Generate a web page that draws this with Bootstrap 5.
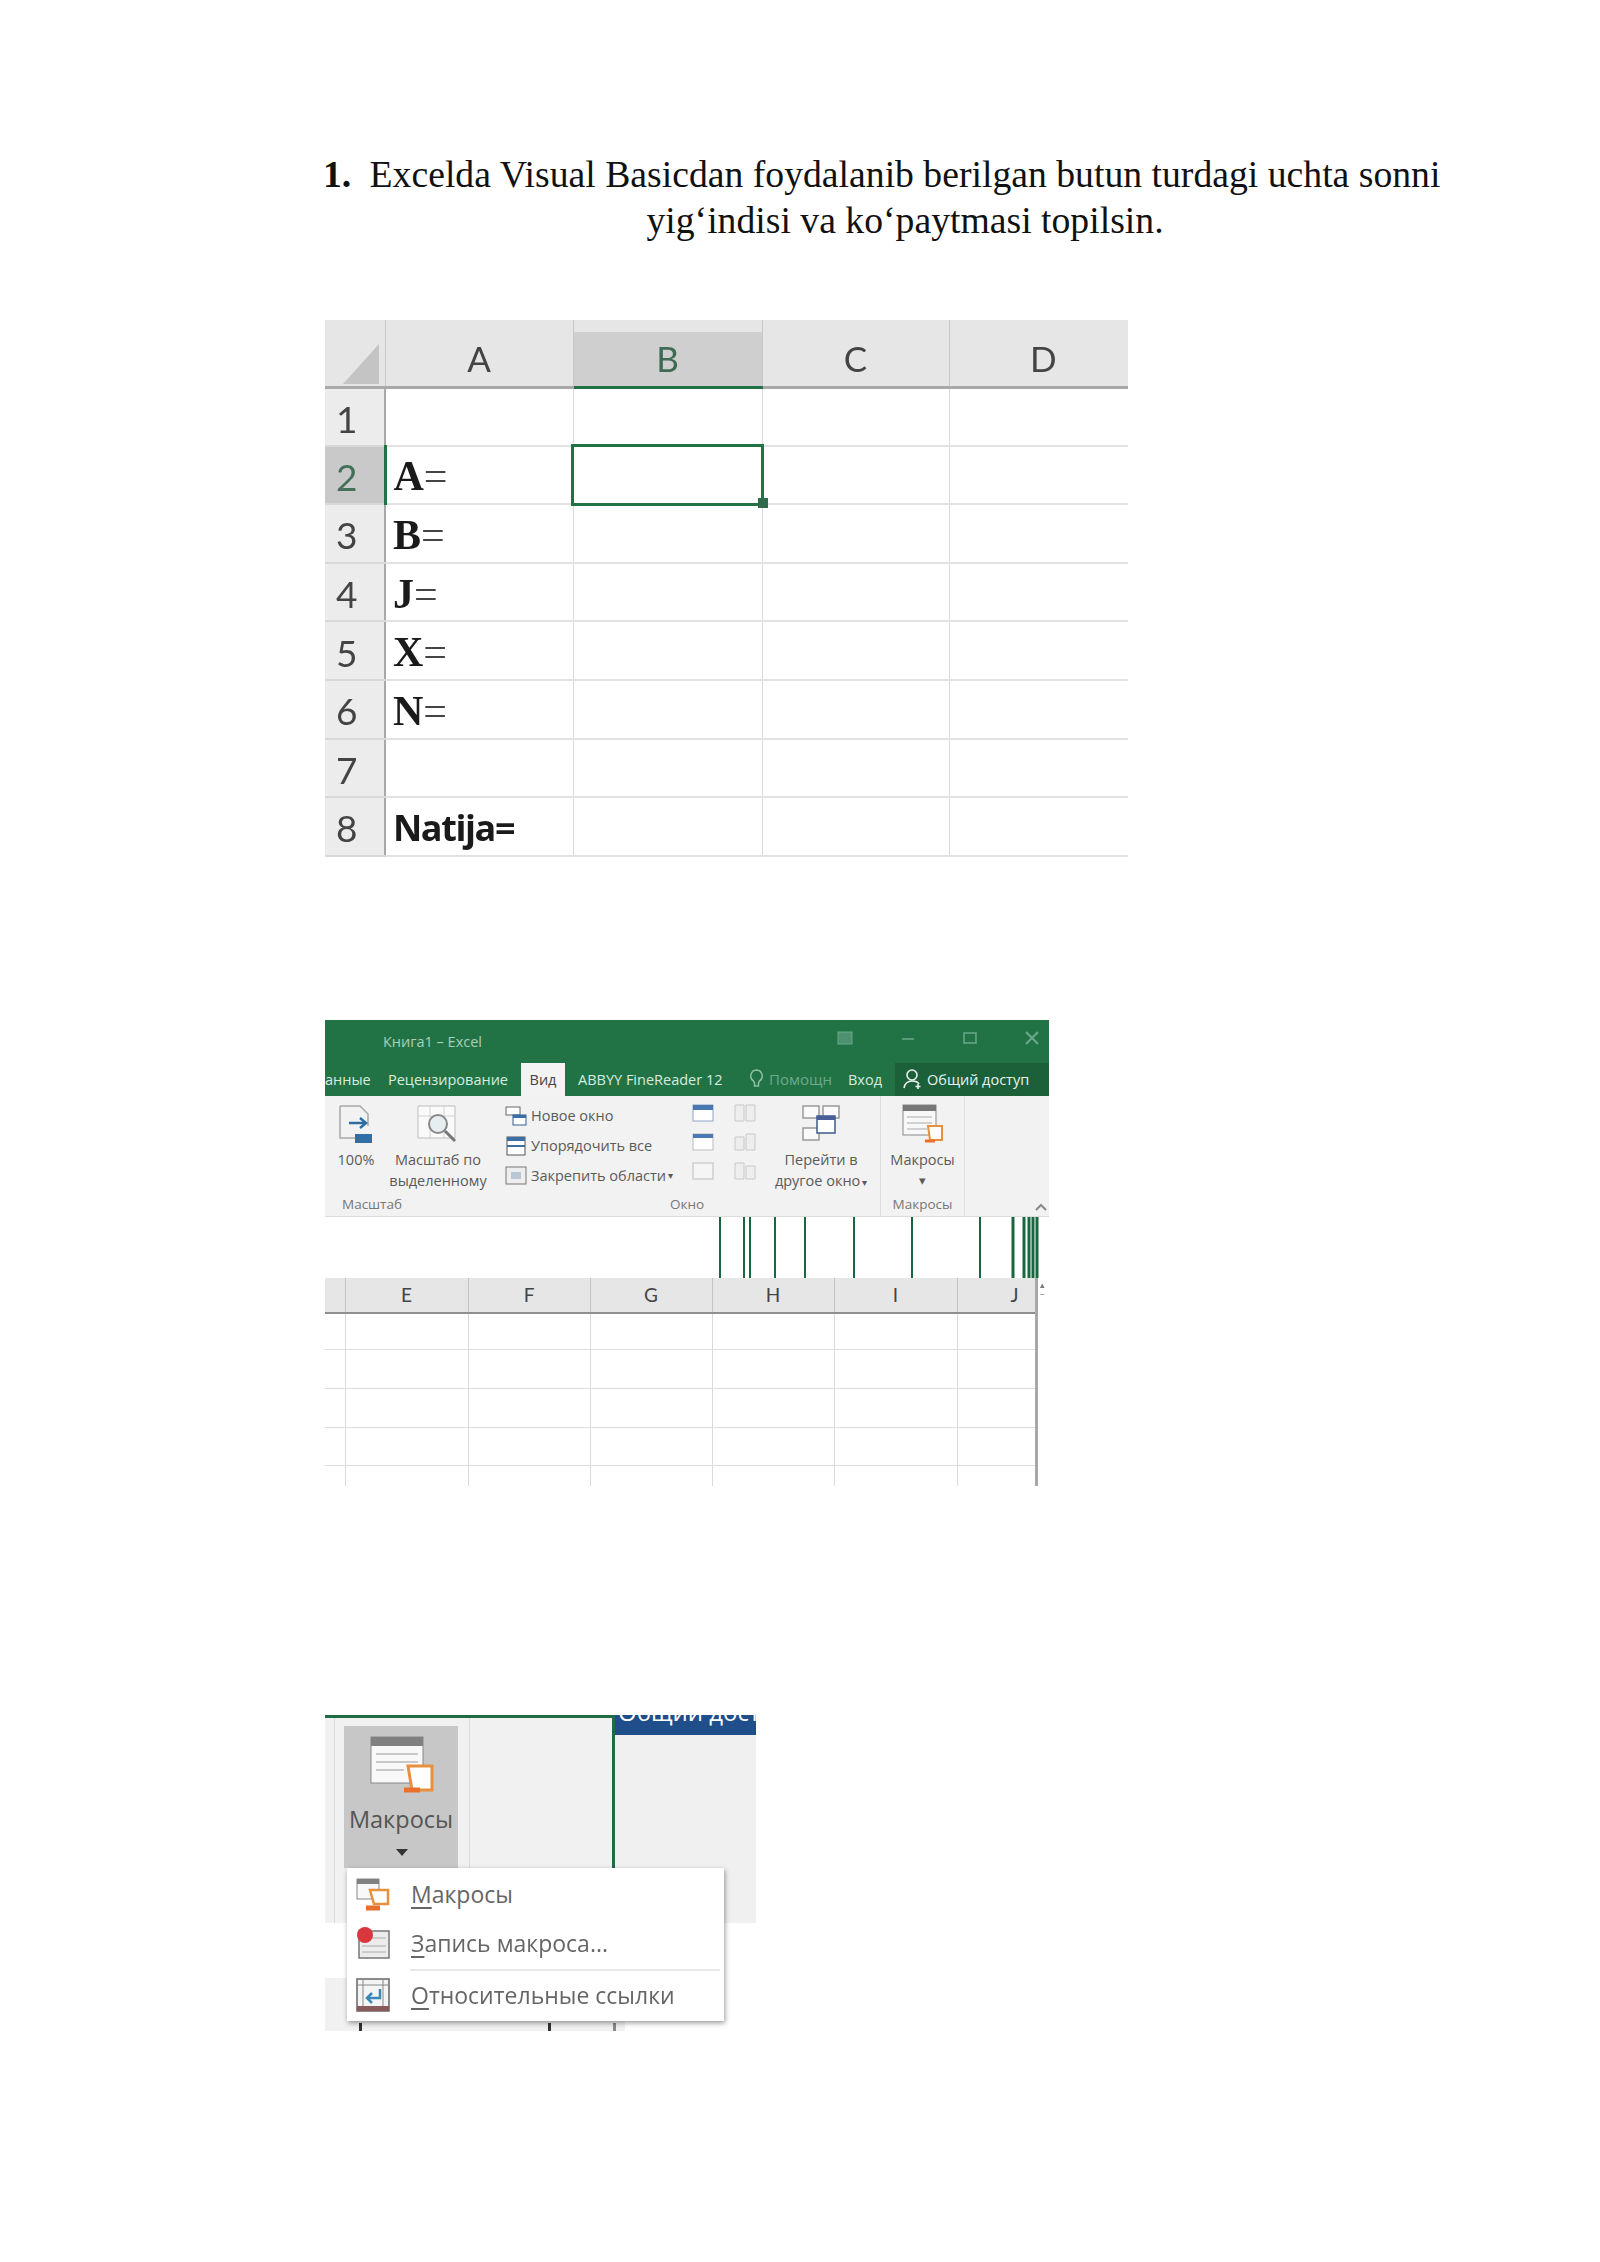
<!DOCTYPE html>
<html lang="uz">
<head>
  <meta charset="UTF-8" />
  <title>Excel VBA</title>
  <link href="https://cdn.jsdelivr.net/npm/bootstrap@5.3.3/dist/css/bootstrap.min.css" rel="stylesheet">
  <style>
    html, body { margin: 0; background: #fff; }
    .sheet-page { width: 1600px; height: 2262px; padding: 151px 0 0 323px; overflow: hidden; }
    .task { width: 1120px; font: 37.7px/46px "Liberation Serif", serif; color: #111; }
    .task-num { width: 46px; flex: none; font-weight: 700; }
    .task-body { width: 1072px; flex: none; text-align: center; }
    .shot { margin-left: 2px; filter: blur(.7px); }

    /* first picture */
    .shot-one { margin-top: 77px; width: 803px; }
    .xl-one { table-layout: fixed; width: 803px; border-collapse: collapse; font-family: Lato, sans-serif; color: #444; }
    .xl-one th { height: 67px; background: #e6e6e6; border-bottom: 3px solid #a9a9a9; border-right: 1px solid #c8c8c8; font-size: 35px; font-weight: 400; text-align: center; padding-top: 12px; }
    .xl-one th:last-child, .xl-one td:last-child { border-right: 0; }
    .xl-one th.on { background: linear-gradient(#e6e6e6 12px, #cfcfcf 12px); border-bottom-color: #217346; color: #3f6b55; }
    .xl-one th.col-d { padding-left: 10px; }
    .xl-one th.corner { padding: 12px 0 0 12px; vertical-align: middle; }
    .xl-one tr { height: 58.6px; }
    .xl-one td { padding: 3px 0 0; line-height: 1; border-right: 1px solid #dcdcdc; border-bottom: 2px solid #e2e2e2; vertical-align: middle; }
    .xl-one td.rn { background: #ececec; font-size: 37px; padding-left: 11px; border-right: 2px solid #a8a8a8; border-bottom: 2px solid #d8d8d8; }
    .xl-one td.rn.on { background: #c9c9c9; border-right: 3px solid #217346; color: #44705a; }
    .xl-one td.lbl { padding-left: 7px; font: 700 42px/1 "Liberation Serif", serif; color: #1a1a1a; }
    .xl-one td.lbl span { font-weight: 400; color: #444; }
    .xl-one td.lbl-sans { padding-left: 7px; font: 700 36px/1 "Open Sans", sans-serif; letter-spacing: -1.4px; color: #1a1a1a; }
    .xl-one td.sel { position: relative; outline: 3px solid #217346; outline-offset: -1px; }
    .xl-one td.sel::after { content: ""; position: absolute; right: -6px; bottom: -5px; width: 10px; height: 10px; background: #2f6a4c; }

    /* second picture */
    .shot-two { margin-top: 163px; width: 724px; font-family: "Open Sans", sans-serif; }
    .title-row { height: 43px; background: #217346; color: #a9cfb8; font-size: 14.5px; padding: 11px 0 0 58px; }
    .win-btns { margin-left: auto; gap: 48px; padding: 0 10px 0 0; color: #5c9a78; }
    .tab-row { height: 33px; background: #217346; color: #d8ebdf; font-size: 14.5px; line-height: 33px; white-space: nowrap; overflow: hidden; }
    .tab-row .t1 { width: 63px; flex: none; }
    .tab-row .t2 { width: 133px; flex: none; }
    .tab-row .t3 { width: 44px; flex: none; background: #f3f3f3; color: #444; text-align: center; height: 33px; }
    .tab-row .t4 { margin-left: 13px; width: 171px; flex: none; }
    .tab-row .t5 { width: 99px; flex: none; color: #6fa98a; display: flex; align-items: center; gap: 5px; font-size: 15px; }
    .tab-row .t6 { width: 47px; flex: none; }
    .tab-row .t7 { margin-left: auto; width: 154px; flex: none; background: #1b6038; color: #e9f3ed; display: flex; align-items: center; gap: 4px; padding-left: 8px; }
    .ribbon { height: 121px; background: #f2f2f2; border-bottom: 1px solid #dcdcdc; color: #5a5a5a; font-size: 14.5px; line-height: 21px; position: relative; }
    .rb-group { height: 100%; display: flex; flex-direction: column; flex: none; }
    .rb-main { flex: 1; display: flex; }
    .rb-name { height: 22px; text-align: center; font-size: 13.5px; color: #777; line-height: 20px; }
    .rb-big { display: flex; flex-direction: column; align-items: center; text-align: center; padding-top: 8px; flex: none; }
    .rb-big svg { height: 40px; flex: none; margin-bottom: 5px; }
    .rb-list { padding-top: 5px; flex: none; }
    .rb-line { height: 30px; display: flex; align-items: center; gap: 4px; white-space: nowrap; }
    .rb-line svg { flex: none; }
    .rb-drop { font-size: 10px; margin-left: -2px; }
    .rb-mini { width: 22px; flex: none; padding-top: 8px; }
    .rb-mini svg { display: block; height: 18px; width: 22px; margin-bottom: 11px; }
    .rb-sep { border-right: 1px solid #dedede; }
    .chev { position: absolute; right: 2px; bottom: 5px; }
    .bars { display: block; height: 61px; width: 724px; }
    .xl-two { table-layout: fixed; width: 711px; border-collapse: collapse; color: #444; }
    .xl-two th { height: 35px; background: #e6e6e6; border-right: 1px solid #c4c4c4; border-bottom: 2px solid #8f8f8f; font-size: 19px; font-weight: 400; text-align: center; font-family: Lato, sans-serif; }
    .xl-two td { padding: 0; border-right: 1px solid #dadada; border-bottom: 1px solid #dedede; }
    .xl-two tr:last-child td { border-bottom: 0; }
    .xl-two td:last-child, .xl-two th:last-child { border-right: 3px solid #a8a8a8; }
    .two-grid { position: relative; }
    .scroll-mark { position: absolute; top: 2px; right: 0; width: 9px; color: #777; font-size: 9px; line-height: 9px; }

    /* third picture */
    .shot-three { position: relative; margin-top: 229px; width: 431px; height: 316px; font-family: "Open Sans", sans-serif; color: #666; }
    .three-top { height: 208px; }
    .three-left { width: 290px; flex: none; background: #f1f1f1; border-top: 3px solid #1e6b45; border-right: 3px solid #1e6b45; padding: 8px 0 0 19px; }
    .three-left { background-image: linear-gradient(#dcdcdc, #dcdcdc), linear-gradient(#dcdcdc, #dcdcdc); background-size: 1px 100%; background-position: 9px 0, 144px 0; background-repeat: no-repeat; }
    .mac-btn { width: 114px; height: 142px; background: #c7c7c7; text-align: center; padding-top: 10px; }
    .mac-btn svg { display: block; margin: 0 auto 0 26px; }
    .mac-btn .mac-name { font-size: 23.5px; line-height: 32px; margin-top: 9px; color: #555; }
    .mac-arrow { width: 0; height: 0; border: 6px solid transparent; border-top: 7px solid #333; border-bottom: 0; margin: 14px 0 0 52px; }
    .three-right { flex: 1; min-width: 0; background: #f0f0f0; }
    .navy { height: 20px; background: #1f4e8a; color: #fff; font-size: 24px; line-height: 20px; overflow: hidden; white-space: nowrap; padding-left: 3px; }
    .navy span { display: block; margin-top: -13px; }
    .three-low { margin-top: 55px; height: 53px; width: 300px; background-color: #f1f1f1; }
    .three-low { background-image: linear-gradient(#333, #333), linear-gradient(#333, #333), linear-gradient(#888, #888); background-size: 3px 8px; background-repeat: no-repeat; background-position: 34px 100%, 223px 100%, 288px 100%; }
    .mac-menu { position: absolute; left: 22px; top: 153px; width: 377px; height: 153px; background: #fff; box-shadow: 1px 2px 5px rgba(0,0,0,.4); padding: 2px 4px 0 9px; font-size: 23px; line-height: 30px; }
    .mac-item { height: 49px; gap: 21px; white-space: nowrap; }
    .mac-item svg { flex: none; }
    .mac-item u { text-underline-offset: 4px; }
    .mac-line { height: 2px; background: #e8e8e8; margin: 1px 0 0 54px; }
  </style>
</head>
<body>
  <div class="sheet-page">
    <div class="task d-flex">
      <div class="task-num">1.</div>
      <div class="task-body">Excelda Visual Basicdan foydalanib berilgan butun turdagi uchta sonni yig‘indisi va ko‘paytmasi topilsin.</div>
    </div>

    <div class="shot shot-one">
      <table class="xl-one">
        <colgroup><col style="width:60px"><col style="width:188px"><col style="width:189px"><col style="width:187px"><col style="width:179px"></colgroup>
        <tr>
          <th class="corner"><svg width="36" height="40" viewBox="0 0 36 40"><polygon points="36,0 36,40 0,40" fill="#c4c4c4"/></svg></th>
          <th>A</th><th class="on">B</th><th>C</th><th class="col-d">D</th>
        </tr>
        <tr><td class="rn">1</td><td></td><td></td><td></td><td></td></tr>
        <tr><td class="rn on">2</td><td class="lbl">A<span>=</span></td><td class="sel"></td><td></td><td></td></tr>
        <tr><td class="rn">3</td><td class="lbl">B<span>=</span></td><td></td><td></td><td></td></tr>
        <tr><td class="rn">4</td><td class="lbl">J<span>=</span></td><td></td><td></td><td></td></tr>
        <tr><td class="rn">5</td><td class="lbl">X<span>=</span></td><td></td><td></td><td></td></tr>
        <tr><td class="rn">6</td><td class="lbl">N<span>=</span></td><td></td><td></td><td></td></tr>
        <tr><td class="rn">7</td><td></td><td></td><td></td><td></td></tr>
        <tr><td class="rn">8</td><td class="lbl-sans">Natija=</td><td></td><td></td><td></td></tr>
      </table>
    </div>

    <div class="shot shot-two">
      <div class="title-row d-flex">
        <span>Книга1 – Excel</span>
        <div class="win-btns d-flex align-items-start">
          <svg width="16" height="14" viewBox="0 0 16 14"><rect x="1" y="1" width="14" height="12" fill="#4d9270" stroke="#6aa88a"/></svg>
          <svg width="14" height="14" viewBox="0 0 14 14"><path d="M1 8h12" stroke="#6aa88a" stroke-width="1.5"/></svg>
          <svg width="14" height="14" viewBox="0 0 14 14"><rect x="1" y="2" width="12" height="10" fill="none" stroke="#6aa88a" stroke-width="1.5"/></svg>
          <svg width="14" height="14" viewBox="0 0 14 14"><path d="M1 1l12 12M13 1L1 13" stroke="#6aa88a" stroke-width="2"/></svg>
        </div>
      </div>
      <div class="tab-row d-flex">
        <span class="t1">анные</span>
        <span class="t2">Рецензирование</span>
        <span class="t3">Вид</span>
        <span class="t4">ABBYY FineReader 12</span>
        <span class="t5"><svg width="15" height="20" viewBox="0 0 15 20"><path d="M7.500 1a6 6 0 0 0-3 11l1 2v3h4v-3l1-2a6 6 0 0 0-3-11z" fill="none" stroke="#8fc0a5" stroke-width="1.5"/></svg>Помощн</span>
        <span class="t6">Вход</span>
        <span class="t7"><svg width="20" height="22" viewBox="0 0 20 22"><circle cx="9" cy="7" r="5" fill="none" stroke="#e9f3ed" stroke-width="1.600"/><path d="M1 20c1-5 4-7 8-7s6 1 7 3M15 16v5M12.500 18.500h5" fill="none" stroke="#e9f3ed" stroke-width="1.600"/></svg>Общий доступ</span>
      </div>
      <div class="ribbon d-flex">
        <div class="rb-group" style="width:209px">
          <div class="rb-main ps-2">
            <div class="rb-big" style="width:46px">
              <svg width="38" height="40" viewBox="0 0 38 40"><path d="M3 2h20l8 8v12M3 2v32h16" fill="none" stroke="#a8a8a8" stroke-width="1.500"/><path d="M12 19h16M23 14l6 5-6 5" fill="none" stroke="#2d6ca2" stroke-width="2.500"/><rect x="18" y="30" width="17" height="9" fill="#2f6ea6"/></svg>
              100%
            </div>
            <div class="rb-big ms-1" style="width:110px">
              <svg width="42" height="40" viewBox="0 0 42 40"><path d="M1 2h37v32H1z" fill="#fafafa" stroke="#bdbdbd"/><path d="M1 12h37M13 2v32M27 2v32" stroke="#d2d2d2"/><circle cx="21" cy="20" r="9" fill="#e6eef2" stroke="#888" stroke-width="2"/><path d="M28 27l10 10" stroke="#777" stroke-width="3"/></svg>
              <span>Масштаб по<br>выделенному</span>
            </div>
          </div>
          <div class="rb-name" style="width:94px">Масштаб</div>
        </div>
        <div class="rb-group rb-sep" style="width:347px">
          <div class="rb-main">
            <div class="rb-list" style="width:157px;margin-left:-29px">
              <div class="rb-line"><svg width="22" height="20" viewBox="0 0 22 20"><rect x="1" y="1" width="14" height="8" fill="#fff" stroke="#666"/><rect x="8" y="9" width="13" height="10" fill="#fff" stroke="#2f5f8f"/><rect x="8" y="9" width="13" height="3" fill="#3a6ea5"/></svg>Новое окно</div>
              <div class="rb-line"><svg width="22" height="20" viewBox="0 0 22 20"><rect x="2" y="1" width="18" height="18" fill="#fff" stroke="#555"/><rect x="2" y="1" width="18" height="4" fill="#3a6ea5"/><path d="M2 10h18" stroke="#3a6ea5" stroke-width="2"/></svg>Упорядочить все</div>
              <div class="rb-line"><svg width="22" height="20" viewBox="0 0 22 20"><rect x="1" y="1" width="20" height="17" fill="#eee" stroke="#777"/><rect x="6" y="6" width="10" height="7" fill="#b9c6d4"/></svg>Закрепить области <span class="rb-drop">▾</span></div>
            </div>
            <div class="rb-mini" style="margin-left:30px">
              <svg viewBox="0 0 22 18"><rect x="1" y="1" width="20" height="16" fill="#fff" stroke="#8ba4c2"/><rect x="1" y="1" width="20" height="5" fill="#4a78b0"/></svg>
              <svg viewBox="0 0 22 18"><rect x="1" y="1" width="20" height="16" fill="#fff" stroke="#bbb"/><rect x="1" y="1" width="20" height="4" fill="#4a78b0"/></svg>
              <svg viewBox="0 0 22 18"><rect x="1" y="1" width="20" height="16" fill="#f5f5f5" stroke="#bbb"/></svg>
            </div>
            <div class="rb-mini" style="margin-left:20px">
              <svg viewBox="0 0 22 18"><path d="M1 1h9v16H1zM12 1h9v16h-9z" fill="#eee" stroke="#c8c8c8"/></svg>
              <svg viewBox="0 0 22 18"><path d="M1 4h9v13H1zM12 1h9v16h-9z" fill="#eee" stroke="#c8c8c8"/></svg>
              <svg viewBox="0 0 22 18"><path d="M1 1h9v16H1zM12 4h9v13h-9z" fill="#eee" stroke="#c8c8c8"/></svg>
            </div>
            <div class="rb-big" style="width:110px;margin-left:10px">
              <svg width="40" height="40" viewBox="0 0 40 40"><path d="M2 2h16v12H2zM22 2h16v12H22zM2 24h16v12H2z" fill="#fafafa" stroke="#999" stroke-width="1.500"/><rect x="16" y="12" width="18" height="17" fill="#fff" stroke="#3d5a8a" stroke-width="1.500"/><rect x="16" y="12" width="18" height="4" fill="#4a5f9a"/></svg>
              <span>Перейти в<br>другое окно <span class="rb-drop">▾</span></span>
            </div>
          </div>
          <div class="rb-name" style="width:306px">Окно</div>
        </div>
        <div class="rb-group rb-sep" style="width:84px">
          <div class="rb-main">
            <div class="rb-big" style="width:83px">
              <svg width="42" height="40" viewBox="0 0 42 40"><rect x="1" y="1" width="33" height="30" fill="#f8f8f8" stroke="#888"/><rect x="1" y="1" width="33" height="6" fill="#777"/><path d="M5 13h25M5 19h25M5 25h20" stroke="#aaa"/><path d="M26 22h14v14H28z" fill="#fff" stroke="#e8903c" stroke-width="2"/><path d="M23 37h10" stroke="#e8702c" stroke-width="3"/></svg>
              Макросы
              <span class="small">▾</span>
            </div>
          </div>
          <div class="rb-name">Макросы</div>
        </div>
        <svg class="chev" width="12" height="8" viewBox="0 0 12 8"><path d="M1 7l5-5 5 5" fill="none" stroke="#888" stroke-width="2"/></svg>
      </div>
      <svg class="bars" viewBox="0 0 724 61">
        <g stroke="#1a6640" stroke-width="2"><path d="M395 0v61M419 0v61M425 0v61M450 0v61M480 0v61M529 0v61M587 0v61M655 0v61"/></g>
        <g stroke="#1a6640" stroke-width="3"><path d="M688 0v61M699 0v61M704 0v61M708 0v61M712 0v61"/></g>
      </svg>
      <div class="two-grid">
        <table class="xl-two">
          <colgroup><col style="width:20px"><col style="width:123px"><col style="width:122px"><col style="width:122px"><col style="width:122px"><col style="width:123px"><col style="width:79px"></colgroup>
          <tr><th></th><th>E</th><th>F</th><th>G</th><th>H</th><th>I</th><th class="text-end pe-3">J</th></tr>
          <tr style="height:37px"><td></td><td></td><td></td><td></td><td></td><td></td><td></td></tr>
          <tr style="height:39px"><td></td><td></td><td></td><td></td><td></td><td></td><td></td></tr>
          <tr style="height:39px"><td></td><td></td><td></td><td></td><td></td><td></td><td></td></tr>
          <tr style="height:38px"><td></td><td></td><td></td><td></td><td></td><td></td><td></td></tr>
          <tr style="height:20px"><td></td><td></td><td></td><td></td><td></td><td></td><td></td></tr>
        </table>
        <div class="scroll-mark">▴<br>–</div>
      </div>
    </div>

    <div class="shot shot-three">
      <div class="three-top d-flex">
        <div class="three-left">
          <div class="mac-btn">
            <svg width="64" height="58" viewBox="0 0 64 58"><rect x="1" y="1" width="52" height="46" fill="#f8f8f8" stroke="#888"/><rect x="1" y="1" width="52" height="9" fill="#808080"/><path d="M6 18h42M6 26h42M6 34h28" stroke="#999"/><path d="M38 30h24v24H42z" fill="#fff" stroke="#e8903c" stroke-width="3"/><path d="M34 54h16" stroke="#e8702c" stroke-width="5"/></svg>
            <div class="mac-name">Макросы</div>
            <div class="mac-arrow"></div>
          </div>
        </div>
        <div class="three-right">
          <div class="navy"><span>Общий дост</span></div>
        </div>
      </div>
      <div class="three-low"></div>
      <div class="mac-menu">
        <div class="mac-item d-flex align-items-center">
          <svg width="34" height="34" viewBox="0 0 34 34"><rect x="1" y="2" width="22" height="20" fill="#f8f8f8" stroke="#888"/><rect x="1" y="2" width="22" height="5" fill="#808080"/><path d="M14 13h18v14H18z" fill="#fff" stroke="#e8903c" stroke-width="2.500"/><path d="M10 31h14" stroke="#e8702c" stroke-width="5"/></svg>
          <span><u>М</u>акросы</span>
        </div>
        <div class="mac-item d-flex align-items-center">
          <svg width="34" height="34" viewBox="0 0 34 34"><rect x="3" y="5" width="30" height="27" fill="#ececec" stroke="#777" stroke-width="1.500"/><path d="M6 20h24M6 26h24M16 12h14" stroke="#aaa"/><circle cx="9" cy="9" r="8" fill="#d9363e"/></svg>
          <span><u>З</u>апись макроса...</span>
        </div>
        <div class="mac-line"></div>
        <div class="mac-item d-flex align-items-center">
          <svg width="34" height="34" viewBox="0 0 34 34"><rect x="1" y="1" width="32" height="32" fill="#f4f4f4" stroke="#666" stroke-width="1.500"/><path d="M1 7h32M7 1v32M27 1v32" stroke="#888"/><path d="M24 11v9H12" fill="none" stroke="#3b87b8" stroke-width="2.500"/><path d="M16 15l-5 5 5 5" fill="none" stroke="#3b87b8" stroke-width="2.500"/><rect x="1" y="28" width="32" height="5" fill="#8a5a5a"/></svg>
          <span><u>О</u>тносительные ссылки</span>
        </div>
      </div>
    </div>
  </div>
  <script src="https://cdn.jsdelivr.net/npm/bootstrap@5.3.3/dist/js/bootstrap.bundle.min.js"></script>
</body>
</html>
